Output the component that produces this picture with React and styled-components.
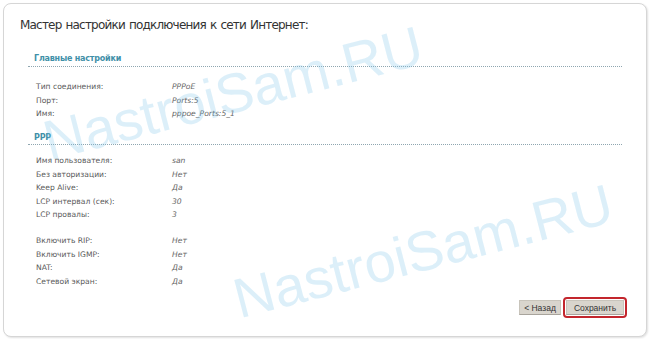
import React from "react";
import styled, { createGlobalStyle } from "styled-components";

const Global = createGlobalStyle`
  html, body { margin: 0; padding: 0; background: #ffffff; }
  body { font-family: "DejaVu Sans", Verdana, sans-serif; }
`;

const Panel = styled.div`
  position: relative;
  box-sizing: border-box;
  margin: 3px 3px 2px 3px;
  height: 334px;
  border: 1px solid #d6d6d6;
  border-radius: 8px;
  box-shadow: 1px 1px 2px rgba(0, 0, 0, 0.12);
  background: #fff;
  overflow: hidden;
  display: flex;
  flex-direction: column;
`;

const Title = styled.h1`
  margin: 13px 0 0 16px;
  font-family: "DejaVu Sans", Verdana, sans-serif;
  font-weight: normal;
  font-size: 12px;
  letter-spacing: -0.8px;
  word-spacing: 1px;
  line-height: 16px;
  color: #333;
`;

const Section = styled.div`
  margin: ${(p) => p.$top}px 24px 0 24px;
  display: flex;
  flex-direction: column;
`;

const SectionHead = styled.div`
  font-size: 8px;
  font-weight: bold;
  letter-spacing: -0.2px;
  color: #3f90a8;
  line-height: ${(p) => p.$lh}px;
  padding: 0 0 1px 6px;
  border-bottom: 1px dotted #8fa6b0;
`;

const Rows = styled.div`
  display: flex;
  flex-direction: column;
  margin-top: ${(p) => p.$top}px;
`;

const Row = styled.div`
  display: grid;
  grid-template-columns: 136px 1fr;
  height: 13.6px;
  align-items: center;
  padding-left: 8px;
  font-size: 7.6px;
  color: #5a5a5a;
`;

const Value = styled.span`
  font-style: italic;
  color: #666;
`;

const Buttons = styled.div`
  margin: 12px 22px 0 0;
  display: flex;
  justify-content: flex-end;
  align-items: center;
  gap: 4px;
`;

const Btn = styled.button`
  font-family: "Liberation Sans", Arial, sans-serif;
  font-size: 8.5px;
  color: #333;
  height: 15px;
  padding: 0;
  width: ${(p) => p.$w}px;
  background: #d9d5cd;
  border: 1px solid #c8c4bb;
  border-bottom-color: #a8a49c;
  border-radius: 0;
  cursor: pointer;
`;

const Marked = styled.span`
  display: inline-flex;
  padding: 1px;
  border: 2px solid #c3262d;
  border-radius: 4px;
  margin: -3px -3px -3px -2px;
`;

const Watermark = styled.span`
  position: absolute;
  left: ${(p) => p.$x}px;
  top: ${(p) => p.$y}px;
  transform: translate(-50%, -50%) rotate(-14.5deg);
  font-family: "Liberation Sans", Arial, sans-serif;
  font-size: 56px;
  color: rgba(120, 192, 232, 0.26);
  white-space: nowrap;
  pointer-events: none;
`;

const main = [
  ["Тип соединения:", "PPPoE"],
  ["Порт:", "Ports:5"],
  ["Имя:", "pppoe_Ports:5_1"],
];

const ppp = [
  ["Имя пользователя:", "san"],
  ["Без авторизации:", "Нет"],
  ["Keep Alive:", "Да"],
  ["LCP интервал (сек):", "30"],
  ["LCP провалы:", "3"],
];

const extra = [
  ["Включить RIP:", "Нет"],
  ["Включить IGMP:", "Нет"],
  ["NAT:", "Да"],
  ["Сетевой экран:", "Да"],
];

const renderRows = (list) =>
  list.map(([l, v]) => (
    <Row key={l}>
      <span>{l}</span>
      <Value>{v}</Value>
    </Row>
  ));

export default function App() {
  return (
    <>
      <Global />
      <Panel>
        <Title>Мастер настройки подключения к сети Интернет:</Title>
        <Section $top={20}>
          <SectionHead $lh={12}>Главные настройки</SectionHead>
          <Rows $top={13}>{renderRows(main)}</Rows>
        </Section>
        <Section $top={11}>
          <SectionHead $lh={11}>PPP</SectionHead>
          <Rows $top={9}>{renderRows(ppp)}</Rows>
          <Rows $top={12}>{renderRows(extra)}</Rows>
        </Section>
        <Buttons>
          <Btn $w={42}>&lt; Назад</Btn>
          <Marked>
            <Btn $w={58}>Сохранить</Btn>
          </Marked>
        </Buttons>
        <Watermark $x={229} $y={89}>NastroiSam.RU</Watermark>
        <Watermark $x={419} $y={247}>NastroiSam.RU</Watermark>
      </Panel>
    </>
  );
}
